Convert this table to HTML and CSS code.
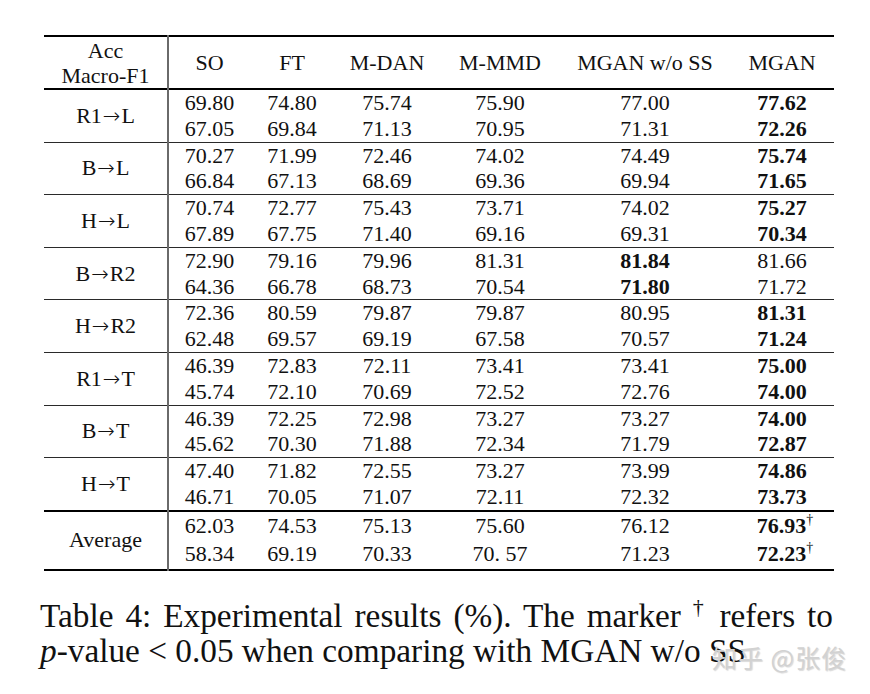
FILE: index.html
```html
<!DOCTYPE html>
<html lang="en">
<head>
<meta charset="utf-8">
<title>Table 4</title>
<link rel="stylesheet" href="styles.css">
</head>
<body>
<div class="page">
  <table class="results">
    <colgroup>
      <col class="c-label"><col class="c-so"><col class="c-ft"><col class="c-dan"><col class="c-mmd"><col class="c-woss"><col class="c-mgan">
    </colgroup>
    <thead>
      <tr>
        <th class="label"><span class="hl">Acc</span><span class="hl">Macro-F1</span></th>
        <th>SO</th><th>FT</th><th>M-DAN</th><th>M-MMD</th><th>MGAN w/o SS</th><th>MGAN</th>
      </tr>
    </thead>
    <tbody class="group">
      <tr><th rowspan="2" class="label">R1<span class="arr">→</span>L</th><td>69.80</td><td>74.80</td><td>75.74</td><td>75.90</td><td>77.00</td><td class="b">77.62</td></tr>
      <tr><td>67.05</td><td>69.84</td><td>71.13</td><td>70.95</td><td>71.31</td><td class="b">72.26</td></tr>
    </tbody>
    <tbody class="group">
      <tr><th rowspan="2" class="label">B<span class="arr">→</span>L</th><td>70.27</td><td>71.99</td><td>72.46</td><td>74.02</td><td>74.49</td><td class="b">75.74</td></tr>
      <tr><td>66.84</td><td>67.13</td><td>68.69</td><td>69.36</td><td>69.94</td><td class="b">71.65</td></tr>
    </tbody>
    <tbody class="group">
      <tr><th rowspan="2" class="label">H<span class="arr">→</span>L</th><td>70.74</td><td>72.77</td><td>75.43</td><td>73.71</td><td>74.02</td><td class="b">75.27</td></tr>
      <tr><td>67.89</td><td>67.75</td><td>71.40</td><td>69.16</td><td>69.31</td><td class="b">70.34</td></tr>
    </tbody>
    <tbody class="group">
      <tr><th rowspan="2" class="label">B<span class="arr">→</span>R2</th><td>72.90</td><td>79.16</td><td>79.96</td><td>81.31</td><td class="b">81.84</td><td>81.66</td></tr>
      <tr><td>64.36</td><td>66.78</td><td>68.73</td><td>70.54</td><td class="b">71.80</td><td>71.72</td></tr>
    </tbody>
    <tbody class="group">
      <tr><th rowspan="2" class="label">H<span class="arr">→</span>R2</th><td>72.36</td><td>80.59</td><td>79.87</td><td>79.87</td><td>80.95</td><td class="b">81.31</td></tr>
      <tr><td>62.48</td><td>69.57</td><td>69.19</td><td>67.58</td><td>70.57</td><td class="b">71.24</td></tr>
    </tbody>
    <tbody class="group">
      <tr><th rowspan="2" class="label">R1<span class="arr">→</span>T</th><td>46.39</td><td>72.83</td><td>72.11</td><td>73.41</td><td>73.41</td><td class="b">75.00</td></tr>
      <tr><td>45.74</td><td>72.10</td><td>70.69</td><td>72.52</td><td>72.76</td><td class="b">74.00</td></tr>
    </tbody>
    <tbody class="group">
      <tr><th rowspan="2" class="label">B<span class="arr">→</span>T</th><td>46.39</td><td>72.25</td><td>72.98</td><td>73.27</td><td>73.27</td><td class="b">74.00</td></tr>
      <tr><td>45.62</td><td>70.30</td><td>71.88</td><td>72.34</td><td>71.79</td><td class="b">72.87</td></tr>
    </tbody>
    <tbody class="group">
      <tr><th rowspan="2" class="label">H<span class="arr">→</span>T</th><td>47.40</td><td>71.82</td><td>72.55</td><td>73.27</td><td>73.99</td><td class="b">74.86</td></tr>
      <tr><td>46.71</td><td>70.05</td><td>71.07</td><td>72.11</td><td>72.32</td><td class="b">73.73</td></tr>
    </tbody>
    <tbody class="group avg">
      <tr><th rowspan="2" class="label">Average</th><td>62.03</td><td>74.53</td><td>75.13</td><td>75.60</td><td>76.12</td><td class="b">76.93<sup class="dag">†</sup></td></tr>
      <tr><td>58.34</td><td>69.19</td><td>70.33</td><td>70. 57</td><td>71.23</td><td class="b">72.23<sup class="dag">†</sup></td></tr>
    </tbody>
  </table>

  <div class="caption">
    <p class="line1">Table 4: Experimental results (%). The marker <sup class="cdag">†</sup> refers to</p>
    <p class="line2"><i>p</i>-value &lt; 0.05 when comparing with MGAN w/o SS</p>
  </div>

  <div class="watermark">知乎 @张俊</div>
</div>
</body>
</html>
```

FILE: styles.css
```css
html, body {
  margin: 0;
  padding: 0;
  background: #ffffff;
}

.page {
  position: relative;
  width: 870px;
  height: 694px;
  padding: 35px 0 0 44px;
  box-sizing: border-box;
  font-family: "Liberation Serif", "Times New Roman", serif;
  color: #111;
}

.results {
  border-collapse: collapse;
  table-layout: fixed;
  width: 790px;
  font-size: 22px;
  border-top: 2px solid #000;
  border-bottom: 2px solid #000;
}

.c-label { width: 124px; }
.c-so { width: 82px; }
.c-ft { width: 84px; }
.c-dan { width: 106px; }
.c-mmd { width: 120px; }
.c-woss { width: 170px; }
.c-mgan { width: 104px; }

.results th,
.results td {
  padding: 0;
  text-align: center;
  vertical-align: middle;
  font-weight: normal;
  white-space: nowrap;
}

.results thead tr {
  height: 53px;
  border-bottom: 2px solid #000;
}

.results thead th {
  line-height: 25px;
}

.hl {
  display: block;
}

.results .label {
  border-right: 2px solid #6a6a6a;
}

.arr {
  font-family: "DejaVu Sans", sans-serif;
  font-size: 21px;
  font-weight: 300;
  margin: 0 1px;
}

.group {
  border-top: 1px solid #2a2a2a;
}

.group td {
  line-height: 25.8px;
  height: 25.8px;
}

.group.avg {
  border-top: 2px solid #000;
}

.group.avg td {
  line-height: 28.5px;
  height: 28.5px;
}

.results .b {
  font-weight: bold;
}

.dag {
  font-size: 14px;
  font-weight: normal;
  line-height: 0;
  vertical-align: 9px;
  margin-right: -6px;
}

.caption {
  width: 793px;
  margin: 27px 0 0 -4px;
  font-size: 33.3px;
  line-height: 35px;
}

.caption p {
  margin: 0;
}

.line1 {
  text-align: justify;
  text-align-last: justify;
}

.line2 {
  text-align: left;
  margin-left: -2px;
}

.cdag {
  font-size: 22px;
  line-height: 0;
  vertical-align: 13px;
}

.watermark {
  position: absolute;
  left: 712px;
  top: 640px;
  font-family: "Noto Sans CJK SC", "Noto Sans", sans-serif;
  font-size: 25px;
  line-height: 34px;
  color: #d2d2d2;
  text-shadow: 1px 1px 1px rgba(0, 0, 0, 0.15);
  letter-spacing: 1px;
}
```
